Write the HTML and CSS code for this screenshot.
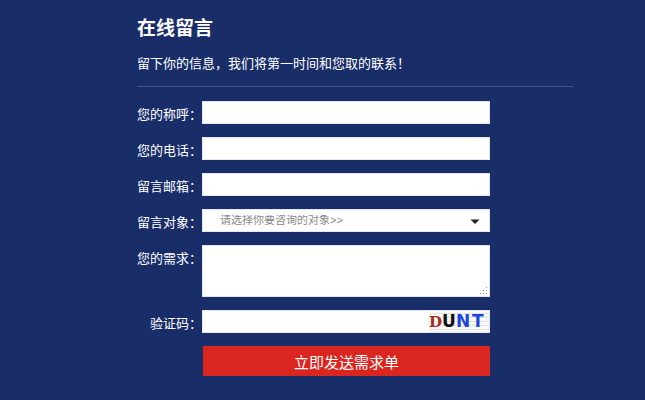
FILE: index.html
```
<!DOCTYPE html>
<html lang="zh-CN">
<head>
  <meta charset="UTF-8" />
  <meta name="viewport" content="width=device-width, initial-scale=1.0"/>
  <title>在线留言</title>
  <link rel="stylesheet" href="styles.css">
</head>
<body>
  <div class="message">
    <div class="message-head">
      <h1>在线留言</h1>
      <p>留下你的信息，我们将第一时间和您取的联系！</p>
    </div>

    <form class="message-form" action="#" method="post">
      <label for="name">您的称呼：</label>
      <div class="field"><input type="text" id="name" name="name"></div>

      <label for="phone">您的电话：</label>
      <div class="field"><input type="text" id="phone" name="phone"></div>

      <label for="email">留言邮箱：</label>
      <div class="field"><input type="text" id="email" name="email"></div>

      <label for="target">留言对象：</label>
      <div class="field">
        <select id="target" name="target">
          <option>请选择你要咨询的对象&gt;&gt;</option>
        </select>
        <svg class="arrow" width="10" height="5" viewBox="0 0 10 5"><path d="M0.5 0.5h9L5 5z" fill="#222"/></svg>
      </div>

      <label for="need">您的需求：</label>
      <div class="field">
        <textarea id="need" name="need"></textarea>
        <svg class="grip" width="8" height="8" viewBox="0 0 8 8" fill="#888">
          <rect x="6" y="0" width="1" height="1"/>
          <rect x="3" y="3" width="1" height="1"/>
          <rect x="6" y="3" width="1" height="1"/>
          <rect x="0" y="6" width="1" height="1"/>
          <rect x="3" y="6" width="1" height="1"/>
          <rect x="6" y="6" width="1" height="1"/>
        </svg>
      </div>

      <label for="code">验证码：</label>
      <div class="field">
        <input type="text" id="code" name="code">
        <svg class="captcha" width="60" height="21" viewBox="0 0 60 21">
          <rect width="60" height="21" fill="#f8f8f6"/>
          <path d="M0 2.5h60M0 6.5h60M0 10.5h60M0 14.5h60M0 18.5h60" stroke="#e2e2de"/>
          <text x="0" y="16" class="serif" fill="#a5281c">D</text>
          <text x="13" y="16" fill="#111">U</text>
          <text x="27" y="16" fill="#1d46dc">N</text>
          <text x="43" y="16" fill="#1d46dc">T</text>
        </svg>
      </div>

      <button type="submit">立即发送需求单</button>
    </form>
  </div>
</body>
</html>
```
FILE: styles.css
```
* {
  box-sizing: border-box;
}

body {
  margin: 0;
  background-color: #192d69;
  color: #fff;
  font-family: "Noto Sans CJK SC", sans-serif;
  font-size: 13px;
}

.message {
  padding: 13px 72px 24px 137px;
}

.message-head {
  padding-bottom: 13px;
  border-bottom: 1px solid #435589;
}

h1 {
  margin: 0 0 12px;
  font-size: 19px;
  line-height: 28px;
}

p {
  margin: 0;
  line-height: 20px;
}

.message-form {
  display: grid;
  grid-template-columns: 65px 1fr;
  row-gap: 8px;
  margin: 14px 83px 0 0;
}

label {
  line-height: 26px;
  text-align: right;
}

.field {
  position: relative;
  padding-bottom: 5px;
}

input,
select,
textarea {
  display: block;
  width: 100%;
  height: 23px;
  margin: 0;
  padding: 0 17px;
  border: 1px solid #e4e8f2;
  border-radius: 0;
  background-color: #fff;
  color: #888;
  font-family: "Liberation Mono", "Noto Sans CJK SC", monospace;
  font-size: 11px;
  appearance: none;
}

textarea {
  height: 52px;
  resize: none;
}

.arrow {
  position: absolute;
  top: 10px;
  right: 10px;
  pointer-events: none;
}

.grip {
  position: absolute;
  right: 2px;
  bottom: 7px;
  pointer-events: none;
}

.captcha {
  position: absolute;
  top: 1px;
  right: 1px;
  font-family: "DejaVu Sans", sans-serif;
  font-size: 17px;
  font-weight: bold;
}

.captcha .serif {
  font-family: "DejaVu Serif", serif;
  font-size: 15px;
}

button {
  grid-column: 2;
  height: 30px;
  margin-left: 1px;
  padding: 0;
  border: none;
  background-color: #db251f;
  color: #fff;
  font-family: inherit;
  font-size: 15px;
  cursor: pointer;
}
```
